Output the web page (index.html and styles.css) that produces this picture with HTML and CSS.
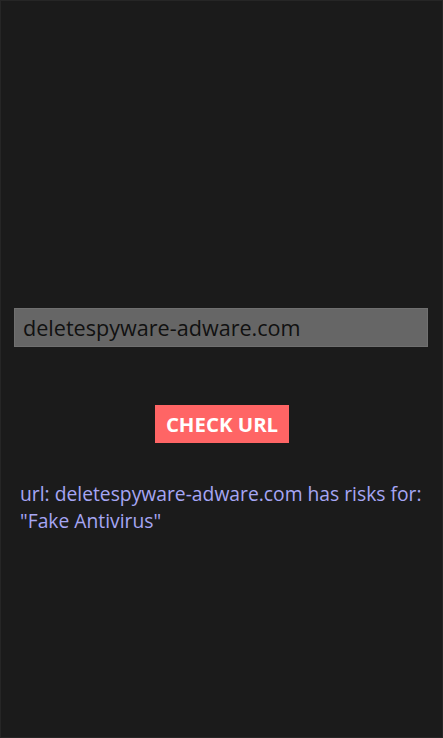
FILE: index.html
```html
<!DOCTYPE html>
<html>
<head>
<meta charset="utf-8">
<link rel="stylesheet" href="styles.css">
</head>
<body>
<div class="screen">
  <div class="field">deletespyware-adware.com</div>
  <div class="actions"><button class="check">CHECK URL</button></div>
  <p class="result">url: deletespyware-adware.com has risks for: "Fake Antivirus"</p>
</div>
</body>
</html>
```
FILE: styles.css
```css
html, body {
  margin: 0;
  padding: 0;
  background: #1b1b1b;
}
.screen {
  width: 443px;
  height: 738px;
  box-sizing: border-box;
  border: 1px solid #262626;
  padding: 307px 14px 0 13px;
  display: flex;
  flex-direction: column;
  font-family: "Open Sans", "Noto Sans", sans-serif;
}
.field {
  height: 39px;
  box-sizing: border-box;
  background: #666666;
  border: 1px solid #707070;
  color: #111111;
  font-size: 21.6px;
  line-height: 37px;
  padding-left: 8px;
}
.actions {
  display: flex;
  justify-content: center;
  margin-top: 58px;
  padding-left: 2px;
}
.check {
  width: 134px;
  height: 38px;
  border: none;
  background: #ff6565;
  color: #ffffff;
  font-family: "Open Sans", "Noto Sans", sans-serif;
  font-weight: 700;
  font-size: 20.4px;
  padding: 0;
}
.result {
  margin: 37px 0 0 6px;
  color: #a6a6f4;
  font-size: 19.3px;
  line-height: 27px;
}
```
